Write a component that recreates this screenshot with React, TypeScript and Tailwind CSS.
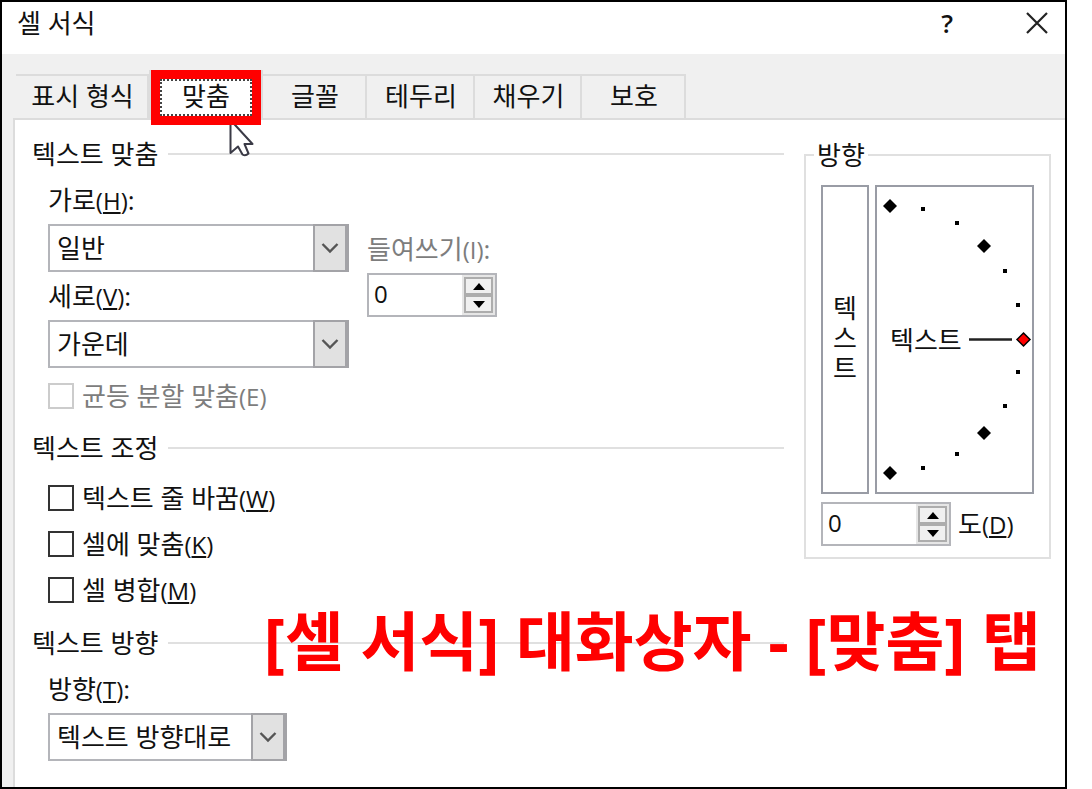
import clsx from "clsx";
import { useState } from "react";
import type { ReactNode } from "react";

const tabs = [
  { id: "number", label: "표시 형식", width: "w-[133px]" },
  { id: "alignment", label: "맞춤", width: "w-[114px]" },
  { id: "font", label: "글꼴", width: "w-[104px]" },
  { id: "border", label: "테두리", width: "w-[108px]" },
  { id: "fill", label: "채우기", width: "w-[107px]" },
  { id: "protection", label: "보호", width: "w-[104px]" },
];

const controls = [
  { id: "wrap", label: "텍스트 줄 바꿈", hotkey: "W" },
  { id: "shrink", label: "셀에 맞춤", hotkey: "K" },
  { id: "merge", label: "셀 병합", hotkey: "M" },
];

const dialDiamonds = [
  [13, 19],
  [107, 59],
  [107, 246],
  [13, 286],
];

const dialDots = [
  [46, 22],
  [80, 36],
  [128, 84],
  [141, 118],
  [141, 185],
  [128, 219],
  [80, 267],
  [46, 281],
];

function Hotkey({ char, plain }: { char: string; plain?: boolean }) {
  return (
    <span className="text-[24px]">
      (
      <span className={clsx(!plain && "underline decoration-2 underline-offset-2")}>
        {char}
      </span>
      )
    </span>
  );
}

function SectionTitle({ children }: { children: ReactNode }) {
  return (
    <div className="flex h-11 items-center gap-[10px]">
      <h2>{children}</h2>
      <div className="h-[2px] flex-1 bg-[#e0e0e0]" />
    </div>
  );
}

function SelectBox({ id, value, width }: { id: string; value: string; width: string }) {
  return (
    <div className={clsx("relative h-12", width)}>
      <select
        id={id}
        defaultValue={value}
        className="h-full w-full appearance-none border-2 border-[#b4b5ba] bg-white pr-9 pl-[7px] outline-none"
      >
        <option>{value}</option>
      </select>
      <span className="pointer-events-none absolute inset-y-0 right-0 flex w-9 items-center justify-center border-2 border-r-4 border-[#a3a3a7] bg-[#e1e1e1]">
        <svg width="18" height="12" viewBox="0 0 18 12" fill="none">
          <path d="M1.5 2 L9 9.5 L16.5 2" stroke="#555" strokeWidth="2.4" />
        </svg>
      </span>
    </div>
  );
}

function Spinner({ id }: { id: string }) {
  const [value, setValue] = useState(0);

  return (
    <div className="flex h-11 w-[130px] border-2 border-[#b4b5ba] bg-white">
      <input
        id={id}
        type="text"
        value={value}
        onChange={(e) => setValue(Number(e.target.value) || 0)}
        className="w-0 flex-1 pb-[3px] pl-[5px] text-[24px] outline-none"
      />
      <div className="flex w-[33px] flex-col bg-[#e6e6e6] p-[2px]">
        <button
          aria-label="증가"
          onClick={() => setValue(value + 1)}
          className="flex flex-1 items-center justify-center border-2 border-[#adadad] bg-[#f0f0f0]"
        >
          <svg width="12" height="7" viewBox="0 0 12 7">
            <path d="M6 0 L12 7 H0 Z" />
          </svg>
        </button>
        <button
          aria-label="감소"
          onClick={() => setValue(value - 1)}
          className="flex flex-1 items-center justify-center border-2 border-[#adadad] bg-[#f0f0f0]"
        >
          <svg width="12" height="7" viewBox="0 0 12 7">
            <path d="M0 0 H12 L6 7 Z" />
          </svg>
        </button>
      </div>
    </div>
  );
}

function CheckRow({
  id,
  label,
  hotkey,
  disabled,
}: {
  id: string;
  label: string;
  hotkey: string;
  disabled?: boolean;
}) {
  return (
    <div className="flex h-[46px] items-center gap-2">
      <input
        id={id}
        type="checkbox"
        disabled={disabled}
        className={clsx(
          "h-[26px] w-[26px] appearance-none border-2 bg-white checked:bg-[#333]",
          disabled ? "border-[#cccccc]" : "border-[#333333]"
        )}
      />
      <label htmlFor={id} className={clsx(disabled && "text-[#7d7d7d]")}>
        {label}
        <Hotkey char={hotkey} plain={disabled} />
      </label>
    </div>
  );
}

function Pointer() {
  return (
    <svg
      className="absolute top-[44px] left-[76px]"
      width="30"
      height="44"
      viewBox="0 0 30 44"
    >
      <path
        d="M3.5 4 V37 L11 30.5 L15.5 38.5 Q18.5 40.5 21.5 37.5 L17.5 28 H25.5 Z"
        fill="#fff"
        stroke="#3a3a46"
        strokeWidth="2"
        strokeLinejoin="round"
      />
    </svg>
  );
}

function Orientation() {
  return (
    <fieldset className="border-2 border-[#e0e0e0]">
      <legend className="ml-2 px-[3px]">방향</legend>
      <div className="px-[15px] pt-[15px] pb-[11px]">
        <div className="flex gap-[6px]">
          <button className="flex w-12 items-center justify-center border-2 border-[#999ca5] pb-1">
            <span className="w-[26px] break-all">텍스트</span>
          </button>
          <div className="relative border-2 border-[#999ca5]">
            <svg width="155" height="305" viewBox="0 0 155 305">
              {dialDiamonds.map(([x, y]) => (
                <path key={`${x}-${y}`} d={`M${x} ${y - 7} l7 7 l-7 7 l-7 -7 Z`} />
              ))}
              {dialDots.map(([x, y]) => (
                <rect key={`${x}-${y}`} x={x - 2} y={y - 2} width="4" height="4" />
              ))}
              <path d="M92 152.5 H135" stroke="#222" strokeWidth="2.4" />
              <path
                d="M146.5 146 l6.5 6.5 l-6.5 6.5 l-6.5 -6.5 Z"
                fill="#f00"
                stroke="#000"
                strokeWidth="1.5"
              />
            </svg>
            <span className="absolute inset-y-0 left-[13px] flex items-center">
              텍스트
            </span>
          </div>
        </div>
        <div className="mt-2 flex items-center gap-[7px]">
          <Spinner id="degrees" />
          <label htmlFor="degrees">
            도
            <Hotkey char="D" />
          </label>
        </div>
      </div>
    </fieldset>
  );
}

function App() {
  const [activeTab, setActiveTab] = useState("alignment");

  return (
    <div className="min-h-screen bg-white pr-[25px]">
      <div className="relative flex min-h-screen flex-col border-2 border-black bg-[#f0f0f0] font-['Open_Sans','Noto_Sans_CJK_KR',sans-serif] text-[26px] leading-[30px] text-[#111]">
        <header className="flex h-[52px] items-center justify-between bg-white pr-4 pb-[10px] pl-[15px]">
          <h1>셀 서식</h1>
          <div className="flex items-center gap-[72px]">
            <button aria-label="도움말" className="font-semibold">
              ?
            </button>
            <button aria-label="닫기">
              <svg width="24" height="24" viewBox="0 0 24 24" stroke="#222" strokeWidth="2.2">
                <path d="M2 2 L22 22 M22 2 L2 22" />
              </svg>
            </button>
          </div>
        </header>

        <div role="tablist" className="flex h-16 items-end pl-[14px]">
          {tabs.map((tab) =>
            tab.id === activeTab ? (
              <div
                key={tab.id}
                className={clsx(
                  "relative z-10 -mb-[2px] h-[50px] border-x-2 border-t-2 border-[#dcdcdc] bg-white",
                  tab.width
                )}
              >
                <Pointer />
                <div className="absolute top-[-2px] left-0 h-[55px] w-[110px] border-[9px] border-[#ff0000] bg-white">
                  <button
                    role="tab"
                    aria-selected
                    className="h-full w-full border-2 border-dotted border-[#444] pb-1"
                  >
                    {tab.label}
                  </button>
                </div>
              </div>
            ) : (
              <button
                key={tab.id}
                role="tab"
                aria-selected={false}
                onClick={() => setActiveTab(tab.id)}
                className={clsx(
                  "h-11 border-t-2 border-r-2 border-[#dcdcdc] pb-[3px] pl-[2px]",
                  tab.width
                )}
              >
                {tab.label}
              </button>
            )
          )}
        </div>

        <main className="ml-[11px] flex flex-1 gap-5 border-t-2 border-l-2 border-[#dcdcdc] bg-white pr-[14px] pl-[17px]">
          <div className="flex-1 pt-3">
            <section>
              <SectionTitle>텍스트 맞춤</SectionTitle>
              <div className="flex gap-[18px] pl-4">
                <div>
                  <label htmlFor="horizontal" className="flex h-12 items-center">
                    <span>
                      가로
                      <Hotkey char="H" />:
                    </span>
                  </label>
                  <SelectBox id="horizontal" value="일반" width="w-[301px]" />
                  <label htmlFor="vertical" className="flex h-12 items-center">
                    <span>
                      세로
                      <Hotkey char="V" />:
                    </span>
                  </label>
                  <SelectBox id="vertical" value="가운데" width="w-[301px]" />
                </div>
                <div className="pt-[49px]">
                  <label
                    htmlFor="indent"
                    className="flex h-12 items-center text-[#7d7d7d]"
                  >
                    <span>
                      들여쓰기
                      <Hotkey char="I" plain />:
                    </span>
                  </label>
                  <Spinner id="indent" />
                </div>
              </div>
              <div className="py-[5px] pl-4">
                <CheckRow id="justify" label="균등 분할 맞춤" hotkey="E" disabled />
              </div>
            </section>

            <section className="mt-[2px]">
              <SectionTitle>텍스트 조정</SectionTitle>
              <div className="pt-[5px] pl-4">
                {controls.map((item) => (
                  <CheckRow key={item.id} {...item} />
                ))}
              </div>
            </section>

            <section className="mt-2">
              <SectionTitle>텍스트 방향</SectionTitle>
              <div className="pl-4">
                <label htmlFor="direction" className="flex h-12 items-center">
                  <span>
                    방향
                    <Hotkey char="T" />:
                  </span>
                </label>
                <SelectBox id="direction" value="텍스트 방향대로" width="w-[239px]" />
              </div>
            </section>
          </div>

          <div className="pt-5">
            <Orientation />
          </div>
        </main>

        <p className="absolute right-6 bottom-[106px] text-[64px] leading-[80px] font-bold text-[#ff0000]">
          [셀 서식] 대화상자 - [맞춤] 탭
        </p>
      </div>
    </div>
  );
}

export default App;
